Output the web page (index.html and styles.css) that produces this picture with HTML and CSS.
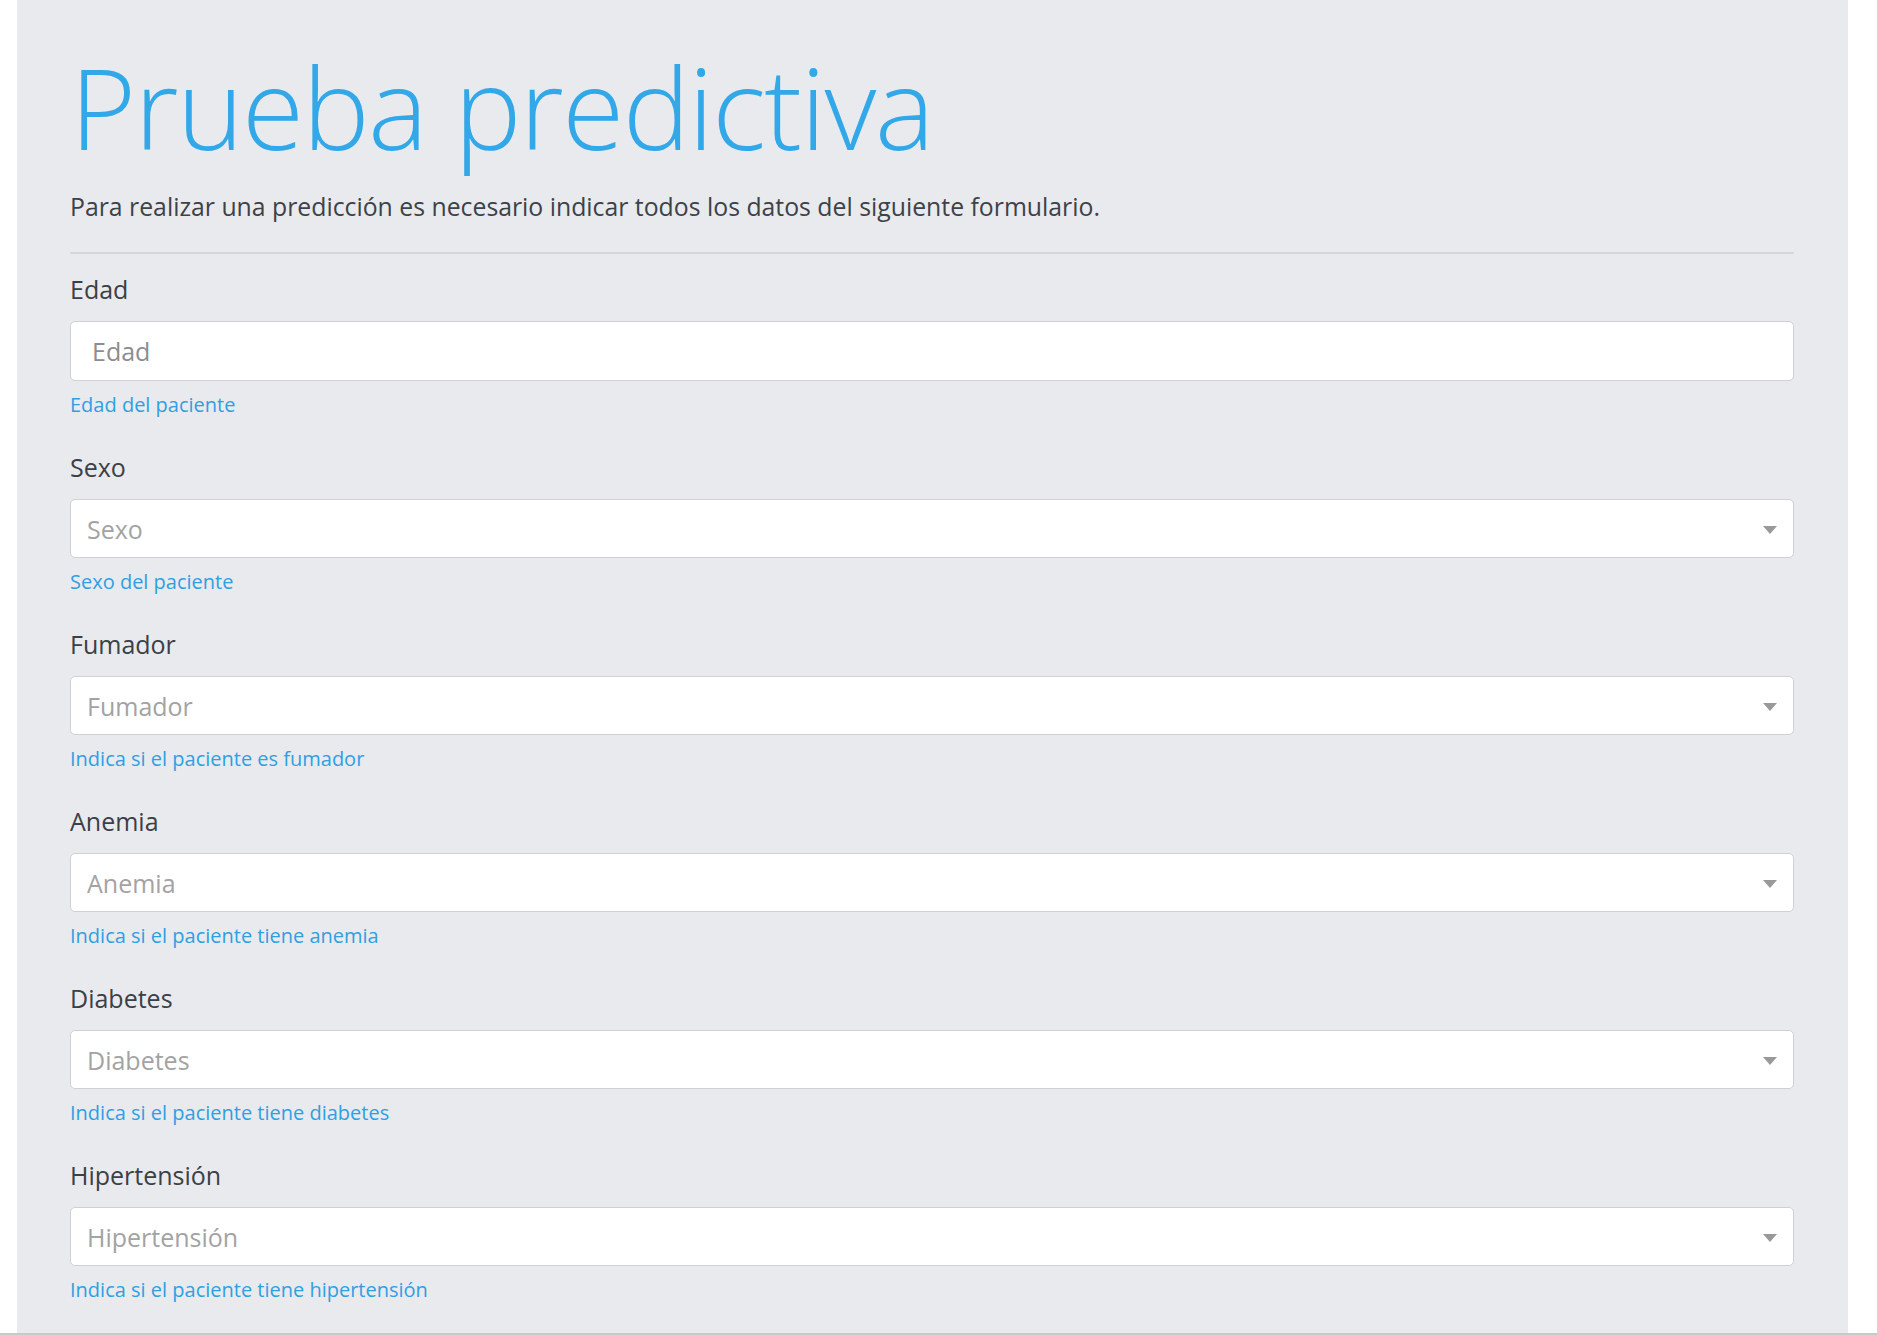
FILE: index.html
```html
<!DOCTYPE html>
<html lang="es">
<head>
<meta charset="utf-8">
<title>Prueba predictiva</title>
<link rel="stylesheet" href="styles.css">
</head>
<body>
<div class="viewport">
  <main class="panel">
    <h1 class="title">Prueba predictiva</h1>
    <p class="lead">Para realizar una predicción es necesario indicar todos los datos del siguiente formulario.</p>
    <hr class="divider">
    <form class="form">
      <div class="group group-input">
        <label class="label" for="edad">Edad</label>
        <input class="control" id="edad" type="text" placeholder="Edad">
        <small class="help">Edad del paciente</small>
      </div>
      <div class="group">
        <label class="label" for="sexo">Sexo</label>
        <div class="select-wrap">
          <select class="control select" id="sexo"><option selected disabled>Sexo</option></select>
        </div>
        <small class="help">Sexo del paciente</small>
      </div>
      <div class="group">
        <label class="label" for="fumador">Fumador</label>
        <div class="select-wrap">
          <select class="control select" id="fumador"><option selected disabled>Fumador</option></select>
        </div>
        <small class="help">Indica si el paciente es fumador</small>
      </div>
      <div class="group">
        <label class="label" for="anemia">Anemia</label>
        <div class="select-wrap">
          <select class="control select" id="anemia"><option selected disabled>Anemia</option></select>
        </div>
        <small class="help">Indica si el paciente tiene anemia</small>
      </div>
      <div class="group">
        <label class="label" for="diabetes">Diabetes</label>
        <div class="select-wrap">
          <select class="control select" id="diabetes"><option selected disabled>Diabetes</option></select>
        </div>
        <small class="help">Indica si el paciente tiene diabetes</small>
      </div>
      <div class="group">
        <label class="label" for="hiper">Hipertensión</label>
        <div class="select-wrap">
          <select class="control select" id="hiper"><option selected disabled>Hipertensión</option></select>
        </div>
        <small class="help">Indica si el paciente tiene hipertensión</small>
      </div>
    </form>
  </main>
</div>
</body>
</html>
```
FILE: styles.css
```css
html, body {
  margin: 0;
  padding: 0;
  background: #ffffff;
}

body {
  font-family: "Open Sans", "Noto Sans", "Liberation Sans", sans-serif;
  color: #3b4046;
}

.viewport {
  height: 1335px;
  overflow: hidden;
  border-bottom: 2px solid #c9c9cb;
  box-sizing: border-box;
}

.panel {
  display: block;
  margin-left: 17px;
  width: 1831px;
  min-height: 1400px;
  box-sizing: border-box;
  background: #e9eaee;
  padding: 37px 54px 0 53px;
}

.title {
  margin: 0;
  font-size: 113px;
  line-height: 139px;
  font-weight: 300;
  letter-spacing: -1.6px;
  color: #33a8e9;
}

.lead {
  margin: 11px 0 0 0;
  font-size: 24.8px;
  line-height: 39px;
  color: #3d4248;
}

.divider {
  margin: 26px 0 0 0;
  border: 0;
  height: 2px;
  background: #d5d7db;
}

.form {
  display: flex;
  flex-direction: column;
  padding-top: 16px;
}

.group {
  display: flex;
  flex-direction: column;
  margin-bottom: 28px;
}

.label {
  font-size: 25px;
  line-height: 39px;
  color: #3b4046;
  margin-bottom: 12px;
}

.control {
  display: block;
  width: 100%;
  box-sizing: border-box;
  height: 59px;
  margin: 0;
  border: 1px solid #cfd1d5;
  border-radius: 5px;
  background: #ffffff;
  font-family: inherit;
  font-size: 25px;
  color: #a3a3a3;
  outline: none;
}

.group-input .control {
  height: 60px;
  padding: 0 21px;
}

.control::placeholder {
  color: #8d8d8f;
  opacity: 1;
}

.select-wrap {
  position: relative;
}

.select {
  -webkit-appearance: none;
  appearance: none;
  padding: 0 40px 0 16px;
}

.select-wrap::after {
  content: "";
  position: absolute;
  right: 17px;
  top: 50%;
  margin-top: -3px;
  border-left: 7.5px solid transparent;
  border-right: 7.5px solid transparent;
  border-top: 8px solid #999999;
  pointer-events: none;
}

.help {
  margin-top: 8px;
  font-size: 20px;
  line-height: 31px;
  color: #2f9fe2;
}
```
